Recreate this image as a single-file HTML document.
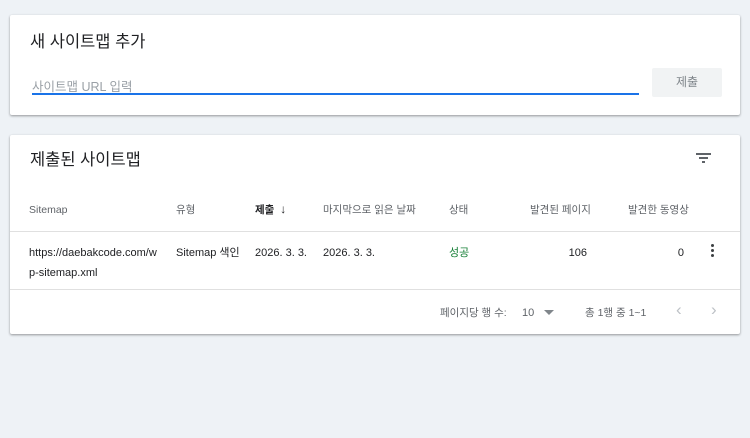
<!DOCTYPE html>
<html><head><meta charset="utf-8"><style>
*{margin:0;padding:0;box-sizing:border-box}
body{width:750px;height:438px;background:#eef2f6;font-family:"Liberation Sans","Noto Sans CJK KR",sans-serif;position:relative;overflow:hidden;color:#202124}
.card{position:absolute;left:10px;width:730px;background:#fff;box-shadow:0 1px 2px rgba(0,0,0,.3),0 1px 3px rgba(0,0,0,.1);border-radius:2px}
.a{position:absolute;white-space:nowrap}
.h{font-size:10.5px;color:#5f6368;line-height:14px}
.c{font-size:11px;color:#202124;line-height:20px}
</style></head><body>
<div class="card" style="top:15px;height:100px">
  <div class="a" style="left:20px;top:16px;font-size:16.5px;line-height:22px">새 사이트맵 추가</div>
  <div class="a" style="left:22px;top:64px;font-size:12.5px;line-height:16px;color:#9aa0a6">사이트맵 URL 입력</div>
  <div class="a" style="left:22px;top:78px;width:607px;height:2px;background:#1a73e8"></div>
  <div class="a" style="left:642px;top:53px;width:70px;height:29px;background:#f1f3f4;border-radius:2px;font-size:12px;color:#80868b;text-align:center;line-height:29px">제출</div>
</div>
<div class="card" style="top:135px;height:199px">
  <div class="a" style="left:20px;top:14px;font-size:16.5px;line-height:22px">제출된 사이트맵</div>
  <div class="a" style="left:686px;top:18px;width:15px;height:1.5px;background:#5f6368"></div>
  <div class="a" style="left:689px;top:22px;width:9px;height:1.5px;background:#5f6368"></div>
  <div class="a" style="left:692px;top:26px;width:3px;height:1.5px;background:#5f6368"></div>
  <div class="a h" style="left:19px;top:68px">Sitemap</div>
  <div class="a h" style="left:166px;top:68px">유형</div>
  <div class="a h" style="left:245px;top:67px;color:#202124;font-weight:bold">제출 <span style="font-weight:normal;font-size:12px;margin-left:3px">↓</span></div>
  <div class="a h" style="left:313px;top:68px">마지막으로 읽은 날짜</div>
  <div class="a h" style="left:439px;top:68px">상태</div>
  <div class="a h" style="left:520px;top:68px">발견된 페이지</div>
  <div class="a h" style="left:618px;top:68px">발견한 동영상</div>
  <div class="a" style="left:0;top:96px;width:730px;height:1px;background:#e0e0e0"></div>
  <div class="a c" style="left:19px;top:108px">https://daebakcode.com/w<br>p-sitemap.xml</div>
  <div class="a c" style="left:166px;top:108px">Sitemap 색인</div>
  <div class="a c" style="left:245px;top:108px">2026. 3. 3.</div>
  <div class="a c" style="left:313px;top:108px">2026. 3. 3.</div>
  <div class="a c" style="left:439px;top:108px;color:#188038">성공</div>
  <div class="a c" style="left:540px;width:37px;text-align:right;top:108px">106</div>
  <div class="a c" style="left:640px;width:34px;text-align:right;top:108px">0</div>
  <div class="a" style="left:701px;top:109px;width:3px">
    <div style="width:3px;height:3px;background:#3c4043;border-radius:50%;margin-bottom:2px"></div>
    <div style="width:3px;height:3px;background:#3c4043;border-radius:50%;margin-bottom:2px"></div>
    <div style="width:3px;height:3px;background:#3c4043;border-radius:50%"></div>
  </div>
  <div class="a" style="left:0;top:154px;width:730px;height:1px;background:#e0e0e0"></div>
  <div class="a h" style="left:430px;top:171px">페이지당 행 수:</div>
  <div class="a h" style="left:512px;top:171px;font-size:11px">10</div>
  <div class="a" style="left:534px;top:175px;width:0;height:0;border-left:5px solid transparent;border-right:5px solid transparent;border-top:5px solid #80868b"></div>
  <div class="a h" style="left:575px;top:171px">총 1행 중 1~1</div>
  <div class="a" style="left:666px;top:165px;font-size:17px;color:#bdc1c6">‹</div>
  <div class="a" style="left:701px;top:165px;font-size:17px;color:#bdc1c6">›</div>
</div>
</body></html>
